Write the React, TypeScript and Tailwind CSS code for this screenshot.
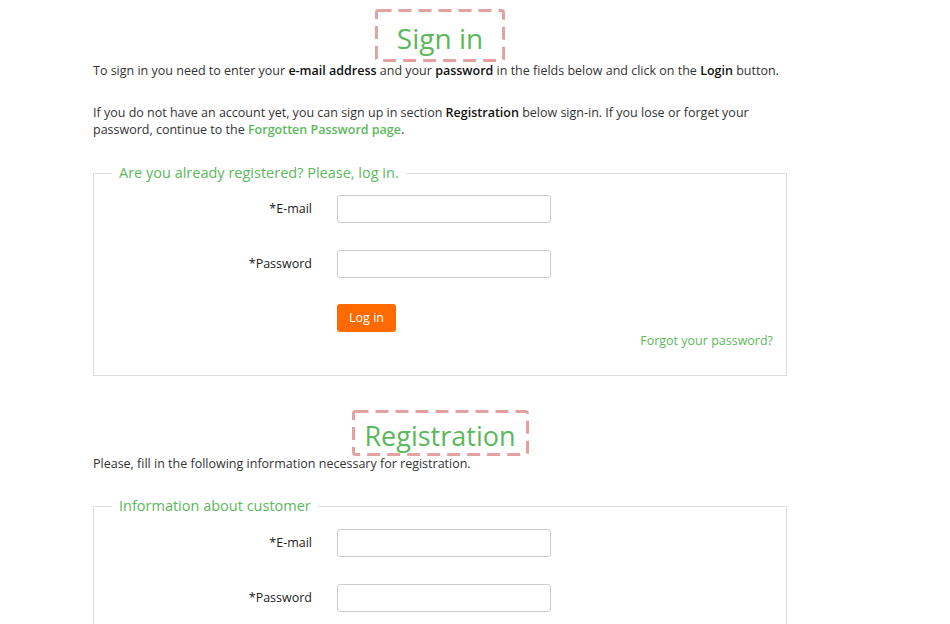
import React from "react";

const green = "text-[#5cb85c]";

const Field: React.FC<{ label: string; type?: string }> = ({ label, type = "text" }) => (
  <div className="flex items-center">
    <label className="w-[218px] text-right text-[12.5px] font-[500] text-[#222]">{label}</label>
    <input
      type={type}
      className="ml-[25px] w-[214px] h-[28px] border border-[#ccc] rounded-[3px] bg-white"
    />
  </div>
);

// dashed annotation frame round the section titles
const DashedTitle: React.FC<{ text: string; w: number; h: number; cls: string; size: string }> = ({
  text,
  w,
  h,
  cls,
  size,
}) => (
  <div className="flex justify-center">
    <div className={`relative flex items-center justify-center ${cls}`}>
      <svg className="absolute inset-0" width={w} height={h}>
        <rect
          x="1.5"
          y="1.5"
          width={w - 3}
          height={h - 3}
          rx="2"
          fill="none"
          stroke="#e3a2a2"
          strokeWidth="3"
          strokeDasharray="13 7"
        />
      </svg>
      <h1 className={`pt-[5px] leading-none ${size} ${green}`}>{text}</h1>
    </div>
  </div>
);

const App: React.FC = () => {
  return (
    <div className="w-[950px] h-[624px] overflow-hidden bg-white font-['Open_Sans',sans-serif] text-[#333]">
      <div className="ml-[93px] w-[694px]">
        <div className="pt-[9px]">
          <DashedTitle text="Sign in" w={130} h={53} cls="w-[130px] h-[53px]" size="text-[28px]" />
        </div>
        <p className="text-[12.5px] leading-[17px]">
          To sign in you need to enter your <b className="font-semibold text-[#111]">e-mail address</b> and your{" "}
          <b className="font-semibold text-[#111]">password</b> in the fields below and click on the{" "}
          <b className="font-semibold text-[#111]">Login</b> button.
        </p>
        <p className="mt-[25px] text-[12.5px] leading-[17px]">
          If you do not have an account yet, you can sign up in section{" "}
          <b className="font-semibold text-[#111]">Registration</b> below sign-in. If you lose or forget your password,
          continue to the <a className={`font-semibold ${green}`}>Forgotten Password page</a>.
        </p>

        <fieldset className="mt-[25px] border border-[#ddd] pb-[26px]">
          <legend className={`ml-[18px] px-[7px] text-[14.5px] leading-[20px] ${green}`}>
            Are you already registered? Please, log in.
          </legend>
          <div className="mt-[12px] flex flex-col gap-[27px]">
            <Field label="*E-mail" />
            <Field label="*Password" type="password" />
          </div>
          <div className="ml-[243px] mt-[26px]">
            <button className="h-[28px] w-[59px] rounded-[3px] bg-[#ff6a00] text-white text-[12.5px]">Log in</button>
          </div>
          <div className="flex justify-end pr-[13px]">
            <a className={`text-[12.5px] leading-[17px] ${green}`}>Forgot your password?</a>
          </div>
        </fieldset>

        <div className="mt-[34px]">
          <DashedTitle text="Registration" w={177} h={46} cls="w-[177px] h-[46px]" size="text-[27px]" />
        </div>
        <p className="mt-[-1px] text-[12.5px] leading-[17px]">
          Please, fill in the following information necessary for registration.
        </p>

        <fieldset className="mt-[24px] border border-[#ddd] pb-[26px]">
          <legend className={`ml-[18px] px-[7px] text-[14.5px] leading-[20px] ${green}`}>Information about customer</legend>
          <div className="mt-[13px] flex flex-col gap-[27px]">
            <Field label="*E-mail" />
            <Field label="*Password" type="password" />
          </div>
        </fieldset>
      </div>
    </div>
  );
};

export default App;
